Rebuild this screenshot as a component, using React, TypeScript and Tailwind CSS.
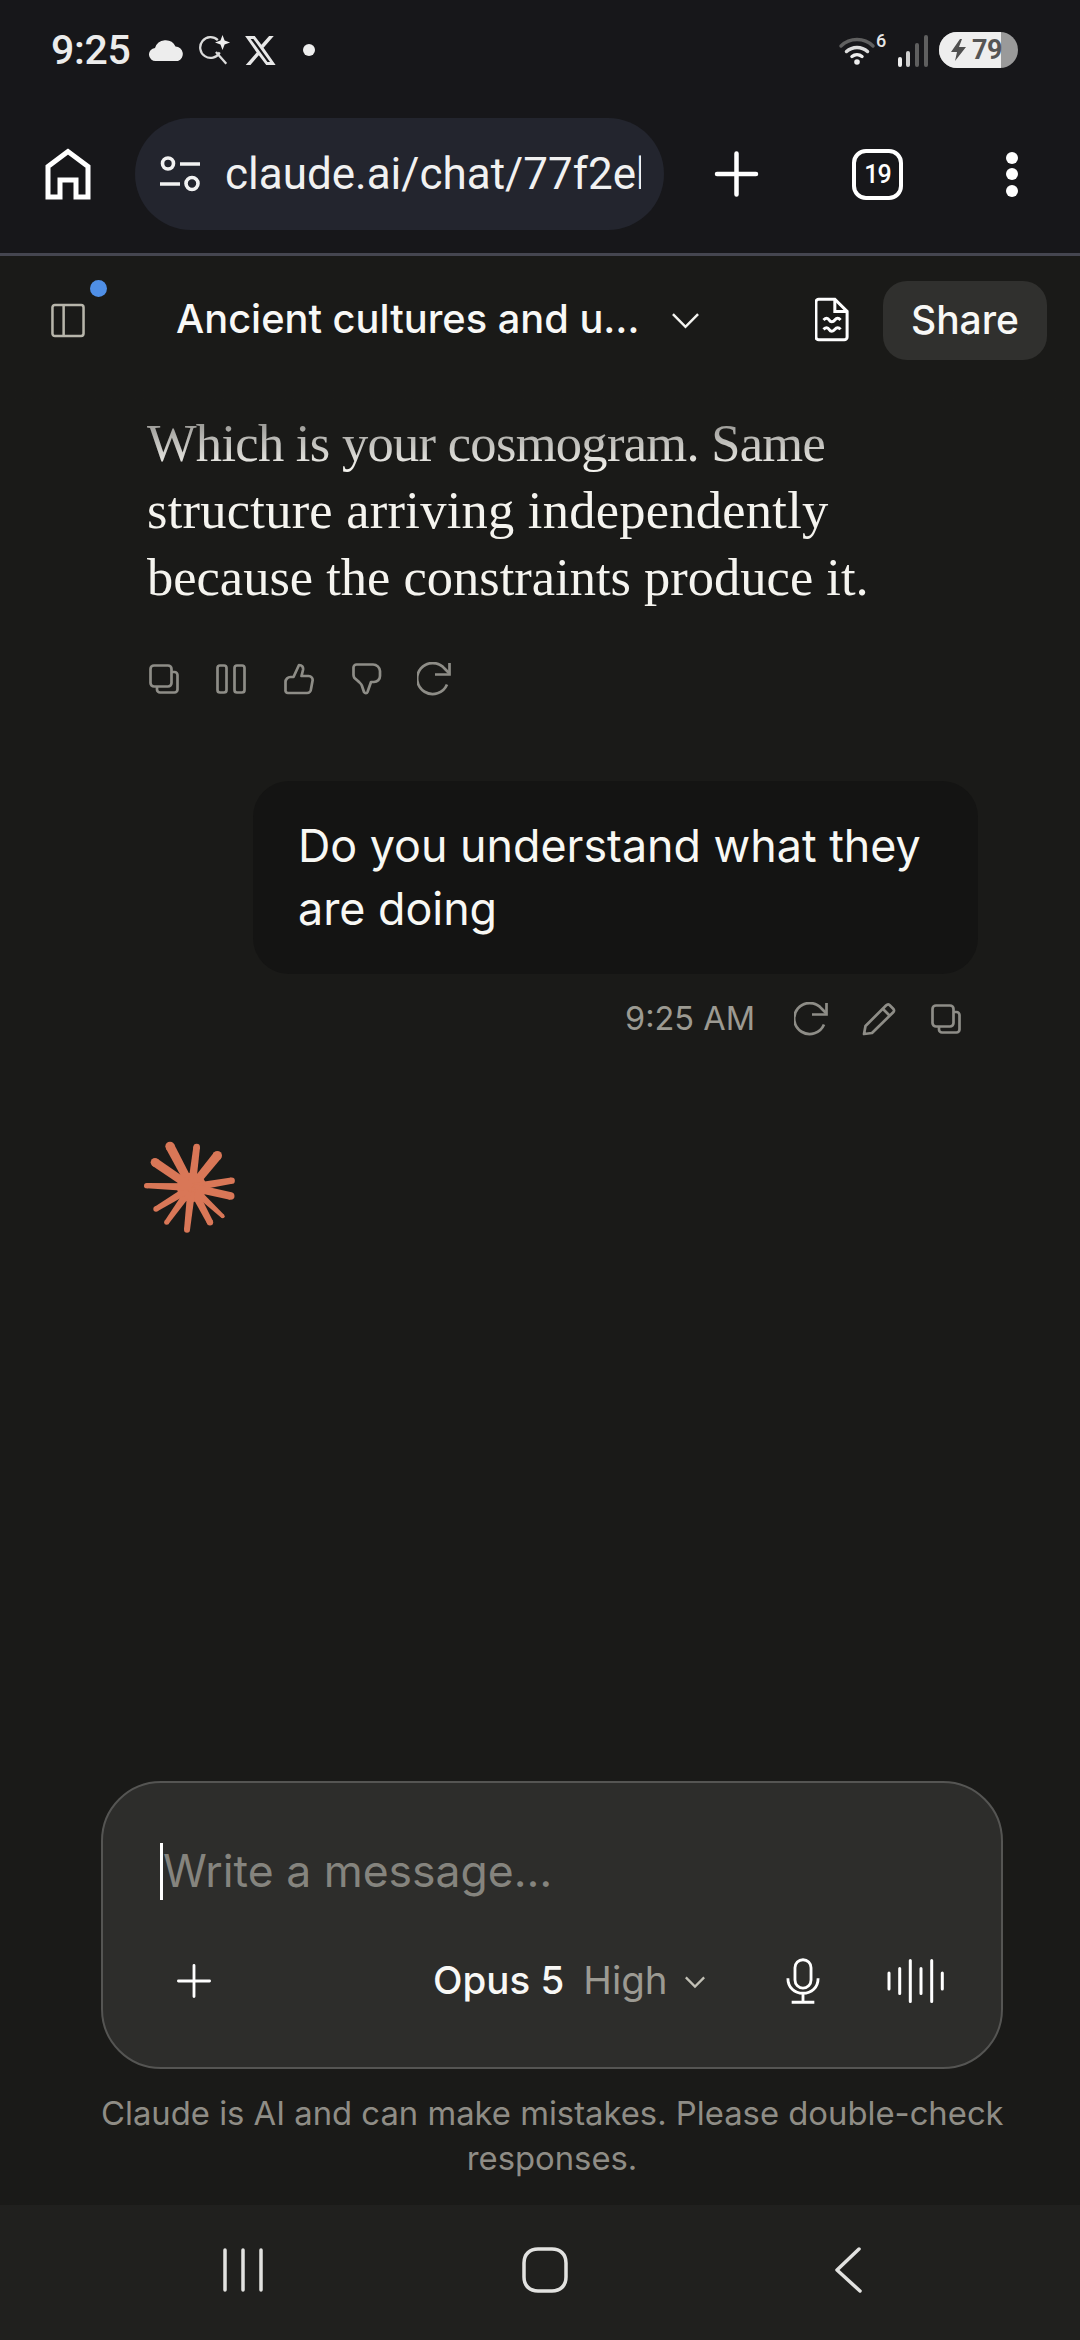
import React from "react";

const sans = "font-['Inter','Liberation_Sans',sans-serif]";
const chrome = "font-['Roboto','Liberation_Sans',sans-serif]";

const spokes: [number, number, number][] = [
  [150, 82, 28], [230, 84, 20], [292, 110, 28], [335, 185, 19], [332, 231, 23], [308, 292, 12],
  [270, 310, 19], [201, 332, 18], [140, 310, 15], [108, 270, 16], [80, 200, 16], [105, 130, 26],
];

function Star() {
  const cx = 215, cy = 205;
  return (
    <svg width="100" height="100" viewBox="60 60 300 300" className="block">
      <circle cx={cx} cy={cy} r={44} fill="#d97757" />
      {spokes.map(([x, y, w], i) => {
        const dx = x - cx, dy = y - cy, l = Math.hypot(dx, dy);
        const nx = -dy / l, ny = dx / l, b = 12;
        return (
          <g key={i} fill="#d97757">
            <polygon points={`${cx + nx * b},${cy + ny * b} ${x + (nx * w) / 2},${y + (ny * w) / 2} ${x - (nx * w) / 2},${y - (ny * w) / 2} ${cx - nx * b},${cy - ny * b}`} />
            <circle cx={x} cy={y} r={w / 2} />
          </g>
        );
      })}
    </svg>
  );
}

function Copy({ c = "#8e8d87" }: { c?: string }) {
  return (
    <svg width="30" height="30" viewBox="0 0 30 30" fill="none" stroke={c} strokeWidth="2.7" className="block">
      <rect x="1.500" y="1.500" width="21" height="21" rx="3.500" />
      <path d="M23 8h2.500a3 3 0 0 1 3 3v14.500a3 3 0 0 1-3 3H11a3 3 0 0 1-3-3V23" />
    </svg>
  );
}
function Retry({ c = "#8e8d87", s = 34 }: { c?: string; s?: number }) {
  return (
    <svg width={s} height={s} viewBox="0 0 34 34" fill="none" stroke={c} strokeWidth="2.7" className="block">
      <path d="M30 22.500A15.500 15.500 0 1 1 27.500 6.500L32 11" />
      <path d="M32.500 1v11.500H18" />
    </svg>
  );
}

export default function App() {
  return (
    <div className="relative flex h-[2340px] w-[1080px] flex-col overflow-hidden bg-[#1a1a18] text-white">
      {/* status bar */}
      <div className={`flex h-[100px] items-center bg-[#17171a] ${chrome}`}>
        <span className="ml-[51px] w-[80px] text-[41px] font-medium leading-none tracking-[-0.3px] text-[#ececec]">9:25</span>
        <svg width="36" height="24" viewBox="0 0 36 24" fill="#ededed" className="ml-[18px] block">
          <path d="M7 23a6.500 6.500 0 0 1-1-13A11 11 0 0 1 26.500 8.500a7.500 7.500 0 0 1 2.500 14.500z" />
        </svg>
        <svg width="32" height="34" viewBox="0 0 34 34" fill="none" stroke="#dcdcdc" strokeWidth="2.400" className="ml-[14px] block">
          <path d="M20 6.500a11 11 0 1 0 2 13" />
          <path d="M18 19l11 12.500" />
          <path d="M25 1l2.200 5.800L33 9l-5.800 2.200L25 17l-2.200-5.800L17 9l5.800-2.200z" fill="#eee" stroke="none" />
        </svg>
        <svg width="33" height="33" viewBox="0 0 24 24" fill="#e8e8e8" className="ml-[13px] block">
          <path d="M18.240 1.500h3.400l-7.430 8.500L23 22.500h-6.850l-5.360-7-6.130 7H1.250l7.950-9.100L.8 1.500h7l4.850 6.400zM17.050 20.300h1.880L6.800 3.600h-2z" />
        </svg>
        <span className="ml-[26px] block h-[12px] w-[12px] rounded-full bg-[#eeeeee]" />
        <div className="flex-1" />
        <svg width="38" height="30" viewBox="0 0 36 30" fill="none" strokeLinecap="round" className="block">
          <path d="M2 11a23 23 0 0 1 32 0" stroke="#606060" strokeWidth="3.500" />
          <path d="M7.500 16.500a15.500 15.500 0 0 1 21 0" stroke="#dddddd" strokeWidth="3.500" />
          <path d="M13 21.500a8 8 0 0 1 10 0" stroke="#eeeeee" strokeWidth="3.500" />
          <circle cx="18" cy="27" r="2.800" fill="#eeeeee" />
        </svg>
        <span className="mb-[18px] w-[14px] text-[18px] font-medium leading-none text-[#e5e5e5]">6</span>
        <svg width="32" height="34" viewBox="0 0 32 34" fill="none" strokeLinecap="round" strokeWidth="4" className="ml-[7px] mt-[1px] block">
          <path d="M3 31v-6" stroke="#eeeeee" />
          <path d="M11 31V19" stroke="#cfcfcf" />
          <path d="M20 31V11" stroke="#5f5f5f" />
          <path d="M29 31V3" stroke="#5f5f5f" />
        </svg>
        <div className="relative ml-[10px] mr-[62px] flex h-[36px] w-[79px] items-center overflow-hidden rounded-full bg-[#9a9a9a]">
          <div className="absolute left-0 top-0 h-full w-[62px] bg-[#eeeeee]" />
          <svg width="18" height="24" viewBox="0 0 18 24" fill="#4f4f4f" className="relative ml-[11px] block">
            <path d="M10 1L1 14h6l-2 9 11-14h-7l3-8z" />
          </svg>
          <span className="relative ml-[4px] text-[27px] font-bold leading-none tracking-[-0.5px] text-[#555555]">79</span>
        </div>
      </div>

      {/* browser toolbar */}
      <div className={`flex h-[156px] items-center border-b-[3px] border-[#454650] bg-[#17171a] pb-[5px] ${chrome}`}>
        <svg width="46" height="52" viewBox="0 0 46 52" fill="none" stroke="#ffffff" strokeWidth="5" className="ml-[45px] block">
          <path d="M23 3.500L3 18.500V49h12V32h16v17h12V18.500z" />
        </svg>
        <div className="ml-[44px] flex h-[112px] w-[529px] items-center overflow-hidden rounded-full bg-[#23252e]">
          <svg width="42" height="36" viewBox="0 0 42 36" fill="none" stroke="#f2f2f2" strokeWidth="3.600" className="ml-[24px] shrink-0 block">
            <circle cx="9" cy="7.500" r="5.500" />
            <path d="M21 8h20" />
            <path d="M1 28h20" />
            <circle cx="33" cy="27.500" r="6" />
          </svg>
          <div className="ml-[24px] w-[416px] shrink-0 overflow-hidden whitespace-nowrap text-[44px] leading-[56px] text-[#f1f1f1]">claude.ai/chat/77f2eb</div>
        </div>
        <svg width="45" height="46" viewBox="0 0 44 46" fill="none" stroke="#ffffff" strokeWidth="4.500" strokeLinecap="round" className="ml-[50px] block">
          <path d="M22 2.500v41M2.500 23h39" />
        </svg>
        <div className="ml-[93px] flex h-[51px] w-[51px] items-center justify-center rounded-[14px] border-[4.500px] border-white text-[25px] font-medium leading-none tracking-[-1px]">19</div>
        <div className="ml-[103px] flex flex-col gap-[4.500px]">
          <span className="block h-[12px] w-[12px] rounded-full bg-white" />
          <span className="block h-[12px] w-[12px] rounded-full bg-white" />
          <span className="block h-[12px] w-[12px] rounded-full bg-white" />
        </div>
      </div>

      {/* chat header */}
      <div className={`relative flex h-[129px] items-start pt-[25px] ${sans}`}>
        <svg width="34" height="35" viewBox="0 0 35 35" fill="none" stroke="#b7b5aa" strokeWidth="2.600" className="ml-[51px] mt-[22px] block">
          <rect x="1.500" y="1.500" width="32" height="32" rx="2.500" />
          <path d="M13 2v31" />
        </svg>
        <span className="absolute left-[90px] top-[24px] block h-[17px] w-[17px] rounded-full bg-[#4f8fe6]" />
        <span className="ml-[91px] mt-[8px] w-[459px] whitespace-nowrap text-[39.800px] font-[450] leading-[60px] text-[#f8f8f6]">Ancient cultures and u…</span>
        <svg width="29" height="18" viewBox="0 0 30 18" fill="none" stroke="#f4f4f0" strokeWidth="2.600" className="ml-[36px] mt-[31px] block">
          <path d="M2 2l13 13L28 2" />
        </svg>
        <svg width="34" height="47" viewBox="0 0 36 47" fill="none" stroke="#ffffff" strokeWidth="3.200" className="ml-[115px] mt-[15px] block">
          <path d="M4 2h17l13 13v27a3 3 0 0 1-3 3H4a3 3 0 0 1-3-3V5a3 3 0 0 1 3-3z" />
          <path d="M21 2v13h13" />
          <path d="M9 24c2.500-2.500 4.500-2.500 6 0s4 2.500 6 0 4-2.500 6 0M9 34c2.500-2.500 4.500-2.500 6 0s4 2.500 6 0 4-2.500 6 0" />
        </svg>
        <div className="ml-[34px] flex h-[79px] w-[164px] items-center justify-center rounded-[24px] bg-[#30302e] text-[39px] font-[450] text-[#f8f8f6]">Share</div>
      </div>

      {/* conversation */}
      <div className="relative flex flex-1 flex-col pt-[25px]">
        <p className="ml-[147px] w-[800px] font-['Liberation_Serif',serif] text-[52.500px] leading-[67px] text-[#f5f4ef]">
          <span className="tracking-[-0.7px]">Which is your cosmogram. Same</span><br />
          <span className="tracking-[0.25px]">structure arriving independently</span><br />
          because the constraints produce it.
        </p>
        <div className="absolute left-0 top-0 h-[85px] w-full bg-gradient-to-b from-[#1a1a18c0] to-[#1a1a1800]" />
        <div className="ml-[149px] mt-[50px] flex h-[36px] items-center">
          <Copy />
          <svg width="30" height="30" viewBox="0 0 30 30" fill="none" stroke="#8e8d87" strokeWidth="2.700" className="ml-[37px] block">
            <rect x="1.500" y="1.500" width="9" height="27" rx="2.500" />
            <rect x="18.500" y="1.500" width="10" height="27" rx="2.500" />
          </svg>
          <svg width="30" height="32" viewBox="0 0 30 32" fill="none" stroke="#8e8d87" strokeWidth="2.700" strokeLinejoin="round" className="ml-[38px] block">
            <path d="M1.500 27V19a5 5 0 0 1 5-5h3L15 2c3 0 4.500 2 4 5l-1.500 6h7a4 4 0 0 1 4 5l-1.500 8a4 4 0 0 1-4 4H4a2.500 2.500 0 0 1-2.500-3z" />
          </svg>
          <svg width="30" height="32" viewBox="0 0 30 32" fill="none" stroke="#8e8d87" strokeWidth="2.700" strokeLinejoin="round" className="ml-[38px] block">
            <path d="M1.500 4.500a3 3 0 0 1 3-3H21a7 7 0 0 1 7 6.500V13a6 6 0 0 1-6 6h-3l-3.500 10c-.6 1.500-2.500 1.500-3.500 0l-2-6c-.5-2-2-3-3.500-4.500L2.500 15a6 6 0 0 1-1-3z" />
          </svg>
          <div className="ml-[35px]"><Retry /></div>
        </div>

        <div className="ml-[253px] mt-[84px] w-[725px] rounded-[36px] bg-[#141413] px-[45px] pb-[33px] pt-[34px]">
          <p className={`text-[44.800px] leading-[63px] text-[#f8f8f4] ${sans}`}>Do you understand what they<br />are doing</p>
        </div>
        <div className={`ml-[625px] mt-[27px] flex h-[36px] items-center ${sans}`}>
          <span className="w-[130px] whitespace-nowrap text-[32.500px] leading-none text-[#9c9a92]">9:25 AM</span>
          <div className="ml-[39px]"><Retry /></div>
          <svg width="34" height="34" viewBox="0 0 34 34" fill="none" stroke="#8e8d87" strokeWidth="2.700" strokeLinejoin="round" className="ml-[34px] block">
            <path d="M2 32l1.500-8L24 3.500c1.500-1.500 3-1.500 4 0l3 3c1.500 1.500 1.500 2.500 0 4L10 31z" />
            <path d="M21 7l7 7" />
          </svg>
          <div className="ml-[35px]"><Copy /></div>
        </div>
        <div className="ml-[140px] mt-[102px]"><Star /></div>
      </div>

      {/* composer */}
      <div className={`ml-[101px] mr-[77px] flex h-[288px] flex-col rounded-[60px] border-2 border-[#555553] bg-[#2d2d2b] ${sans}`}>
        <div className="ml-[57px] mt-[58px] flex h-[60px] items-center">
          <span className="block h-[57px] w-[3px] bg-white" />
          <span className="text-[44.500px] leading-none text-[#85847e]">Write a message…</span>
        </div>
        <div className="mt-[50px] flex h-[60px] items-center">
          <svg width="34" height="34" viewBox="0 0 36 36" fill="none" stroke="#ffffff" strokeWidth="3" strokeLinecap="round" className="ml-[74px] block">
            <path d="M18 1.500v33M1.500 18h33" />
          </svg>
          <span className="ml-[222px] text-[38.500px] font-[450] text-[#f8f8f6]">Opus 5</span>
          <span className="ml-[19px] text-[38.500px] text-[#9c9a92]">High</span>
          <svg width="22" height="16" viewBox="0 0 24 16" fill="none" stroke="#c2c0b6" strokeWidth="2.500" className="ml-[16px] mt-[2px] block">
            <path d="M2 3l10 10L22 3" />
          </svg>
          <svg width="34" height="48" viewBox="0 0 36 48" fill="none" stroke="#ffffff" strokeWidth="3" className="ml-[80px] block">
            <rect x="9.500" y="1.500" width="17" height="30" rx="8.500" />
            <path d="M2 21c0 10 7 16 16 16s16-6 16-16M18 37v8M6 46.500h24" />
          </svg>
          <svg width="58" height="44" viewBox="0 0 58 44" fill="none" stroke="#ffffff" strokeWidth="3" strokeLinecap="round" className="ml-[67px] block">
            <path d="M2 14v16M12.700 9.500v25M23.300 1.500v41M34 9.500v25M44.700 1.500v41M55.300 14v16" />
          </svg>
        </div>
      </div>
      <p className={`ml-[101px] mr-[77px] mt-[22px] h-[114px] whitespace-nowrap text-center text-[32.800px] leading-[45px] text-[#8f8d86] ${sans}`}>
        Claude is AI and can make mistakes. Please double-check<br />responses.
      </p>

      {/* android navigation */}
      <div className="flex h-[135px] items-center bg-[#20201e] pb-[6px]">
        <svg width="44" height="44" viewBox="0 0 44 44" fill="none" stroke="#e2e2e0" strokeWidth="3.500" strokeLinecap="round" className="ml-[221px] block">
          <path d="M4 2v40M22 2v40M40 2v40" />
        </svg>
        <svg width="46" height="46" viewBox="0 0 46 46" fill="none" stroke="#e2e2e0" strokeWidth="3.500" className="ml-[257px] block">
          <path d="M16 2h14c8 0 14 5 14 14v14c0 9-6 14-14 14H16C8 44 2 39 2 30V16C2 7 8 2 16 2z" />
        </svg>
        <svg width="28" height="48" viewBox="0 0 28 48" fill="none" stroke="#e2e2e0" strokeWidth="3.500" strokeLinecap="round" strokeLinejoin="round" className="ml-[266px] block">
          <path d="M25 3L3 24l23 21" />
        </svg>
      </div>
    </div>
  );
}
